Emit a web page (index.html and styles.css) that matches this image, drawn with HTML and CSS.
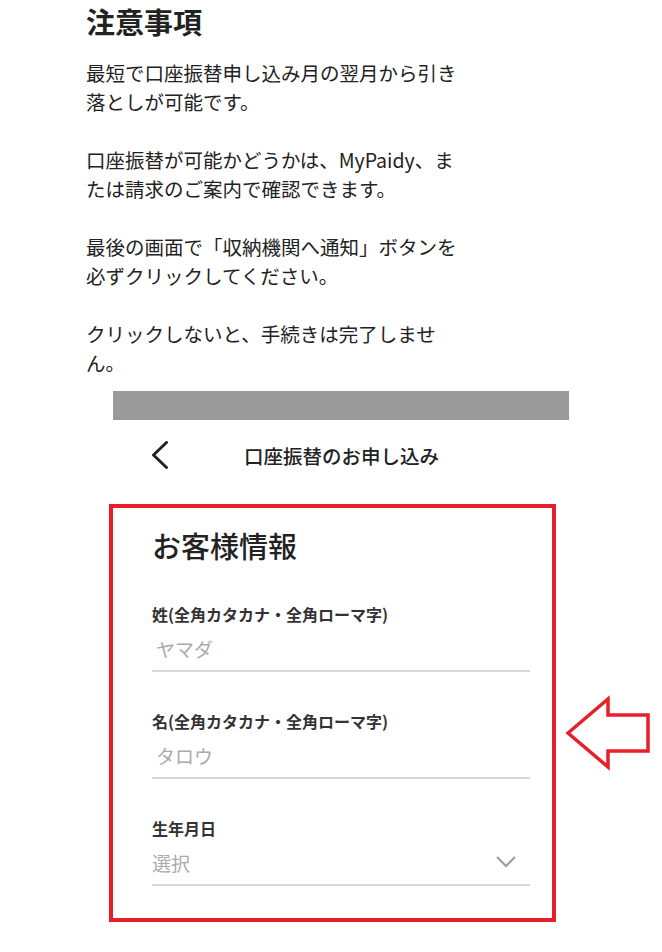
FILE: index.html
```html
<!DOCTYPE html>
<html lang="ja">
<head>
<meta charset="utf-8">
<title>注意事項</title>
<link rel="stylesheet" href="styles.css">
</head>
<body>
<section class="notes">
  <h1 class="notes-title">注意事項</h1>
  <p class="notes-text">最短で口座振替申し込み月の翌月から引き落としが可能です。</p>
  <p class="notes-text">口座振替が可能かどうかは、MyPaidy、または請求のご案内で確認できます。</p>
  <p class="notes-text">最後の画面で「収納機関へ通知」ボタンを必ずクリックしてください。</p>
  <p class="notes-text">クリックしないと、手続きは完了しません。</p>
</section>

<div class="phone">
  <div class="statusbar"></div>
  <header class="appbar">
    <svg class="back" width="18" height="28" viewBox="0 0 18 28" aria-hidden="true">
      <polyline points="15.5,1.5 2.5,14 15.5,26.5" fill="none" stroke="#222" stroke-width="3" stroke-linecap="round" stroke-linejoin="round"/>
    </svg>
    <span class="appbar-title">口座振替のお申し込み</span>
  </header>

  <div class="highlight">
    <h2 class="form-title">お客様情報</h2>
    <div class="field">
      <div class="field-label">姓(全角カタカナ・全角ローマ字)</div>
      <div class="field-input text-input">ヤマダ</div>
    </div>
    <div class="field">
      <div class="field-label">名(全角カタカナ・全角ローマ字)</div>
      <div class="field-input text-input">タロウ</div>
    </div>
    <div class="field">
      <div class="field-label">生年月日</div>
      <div class="field-input select-input">
        <span>選択</span>
        <svg class="caret" width="22" height="14" viewBox="0 0 22 14" aria-hidden="true">
          <polyline points="2,2 11,11 20,2" fill="none" stroke="#9a9a9a" stroke-width="2"/>
        </svg>
      </div>
    </div>
  </div>
</div>

<svg class="arrow" width="90" height="78" viewBox="0 0 90 78" aria-hidden="true">
  <polygon points="4,38 44,4 44,20 84,20 84,56 44,56 44,72" fill="#fff" stroke="#e61f2b" stroke-width="3.5" stroke-linejoin="miter"/>
</svg>
</body>
</html>
```
FILE: styles.css
```css
html, body {
  margin: 0;
  padding: 0;
  background: #fff;
}

body {
  position: relative;
  width: 662px;
  min-height: 952px;
  font-family: "Noto Sans CJK JP", "Noto Sans", sans-serif;
  color: #222;
  overflow: hidden;
}

.notes {
  padding-left: 86px;
  width: 380px;
  margin-bottom: 14px;
}

.notes-title {
  margin: 0 0 16px;
  font-size: 29px;
  line-height: 42px;
  font-weight: 700;
  color: #222;
}

.notes-text {
  margin: 0 0 29px;
  font-size: 19.5px;
  line-height: 29px;
  font-weight: 400;
  color: #222;
}

.notes-text:last-child {
  margin-bottom: 0;
}

.phone {
  margin-left: 113px;
  width: 456px;
}

.statusbar {
  height: 29px;
  background: #9a9a9a;
}

.appbar {
  height: 70px;
  display: flex;
  align-items: center;
  padding-left: 38px;
}

.back {
  display: block;
}

.appbar-title {
  margin-left: 75px;
  font-size: 19.5px;
  font-weight: 500;
  color: #222;
}

.highlight {
  margin-top: 14px;
  margin-left: -4px;
  width: 447px;
  height: 418px;
  box-sizing: border-box;
  border: 4px solid #e61f2b;
  padding: 17px 0 0 39px;
}

.form-title {
  margin: 0 0 37px;
  font-size: 29px;
  line-height: 40px;
  font-weight: 500;
  color: #222;
}

.field {
  width: 378px;
  margin-bottom: 37px;
}

.field:last-child {
  margin-bottom: 0;
}

.field-label {
  font-size: 16px;
  line-height: 24px;
  font-weight: 700;
  letter-spacing: 0;
  color: #333;
}

.field-input {
  height: 44px;
  display: flex;
  align-items: center;
  border-bottom: 2px solid #d8d8d8;
  font-size: 19px;
  color: #aaa;
}

.text-input {
  padding-left: 4px;
}

.select-input {
  justify-content: space-between;
  padding-right: 13px;
}

.caret {
  display: block;
}

.arrow {
  position: absolute;
  left: 564px;
  top: 695px;
}
```
